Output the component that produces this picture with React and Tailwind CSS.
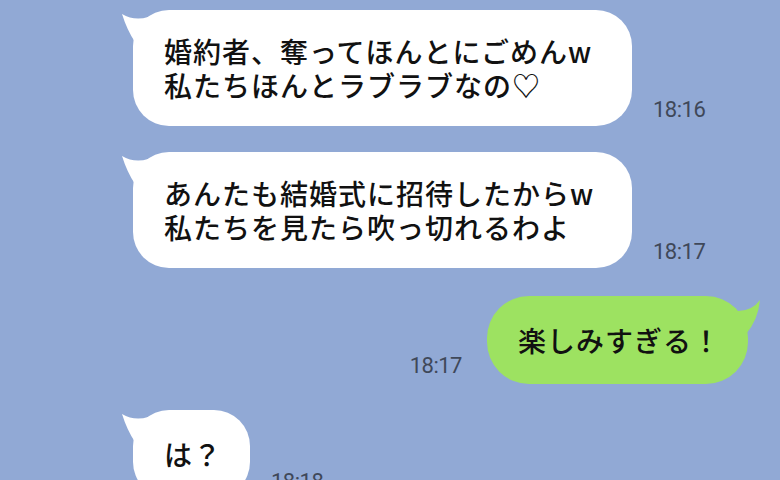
const jp = { fontFamily: '"Noto Sans CJK JP", "Noto Sans", sans-serif' };

function LeftTail() {
  return (
    <svg
      className="absolute left-[-14px] top-0"
      width="44"
      height="34"
      viewBox="0 0 44 34"
    >
      <path d="M3 4 Q20 14 40 2 L40 32 L16 32 Q8 20 3 4 Z" fill="#ffffff" />
    </svg>
  );
}

function RightTail() {
  return (
    <svg
      className="absolute right-[-16px] top-0"
      width="36"
      height="44"
      viewBox="0 0 36 44"
    >
      <path d="M10 15 Q24 15 32 4 Q30 24 18 38 L4 38 L4 15 Z" fill="#9de261" />
    </svg>
  );
}

function Time({ children, className = "" }) {
  return (
    <span
      className={`text-[22px] leading-none tracking-[-0.5px] text-[#3f4859] ${className}`}
      style={{ fontFamily: 'Roboto, "Liberation Sans", sans-serif' }}
    >
      {children}
    </span>
  );
}

function LeftMsg({ lines, width, time, py = "py-[24px]" }) {
  return (
    <div className="flex items-end pl-[133px]">
      <div
        className={`relative bg-white rounded-[36px] pl-[31px] ${py} text-[28px] leading-[34px] tracking-[1px] font-medium text-[#111111] whitespace-nowrap`}
        style={{ ...jp, width }}
      >
        <LeftTail />
        {lines.map((l) => (
          <div key={l} className="relative">{l}</div>
        ))}
      </div>
      <Time className="ml-[21px] mb-[5px]">{time}</Time>
    </div>
  );
}

export default function App() {
  return (
    <div className="w-[780px] h-[480px] overflow-hidden bg-[#91a9d5] flex flex-col pt-[10px] gap-[26px]">
      <LeftMsg
        width={499}
        time="18:16"
        lines={["婚約者、奪ってほんとにごめんw", "私たちほんとラブラブなの♡"]}
      />
      <LeftMsg
        width={499}
        time="18:17"
        lines={["あんたも結婚式に招待したからw", "私たちを見たら吹っ切れるわよ"]}
      />

      <div className="flex items-end justify-end pr-[32px] mt-[2px]">
        <Time className="mr-[25px] mb-[7px]">18:17</Time>
        <div
          className="relative bg-[#9de261] rounded-[42px] w-[261px] pl-[31px] py-[27px] text-[28px] leading-[34px] tracking-[1px] font-medium text-[#111111] whitespace-nowrap"
          style={jp}
        >
          <RightTail />
          <div className="relative">楽しみすぎる！</div>
        </div>
      </div>

      <LeftMsg width={117} time="18:18" py="py-[27px]" lines={["は？"]} />
    </div>
  );
}
